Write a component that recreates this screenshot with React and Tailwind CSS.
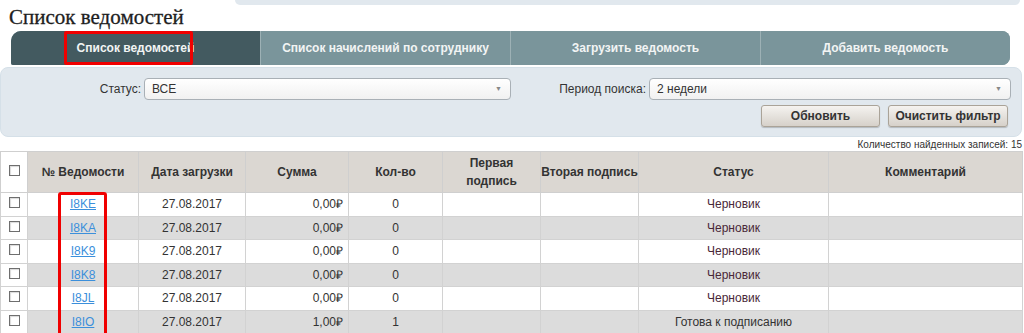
import React from 'react';

const rows = [
  { id: 'I8KE', sum: '0,00', qty: '0', status: 'Черновик' },
  { id: 'I8KA', sum: '0,00', qty: '0', status: 'Черновик' },
  { id: 'I8K9', sum: '0,00', qty: '0', status: 'Черновик' },
  { id: 'I8K8', sum: '0,00', qty: '0', status: 'Черновик' },
  { id: 'I8JL', sum: '0,00', qty: '0', status: 'Черновик' },
  { id: 'I8IO', sum: '1,00', qty: '1', status: 'Готова к подписанию' },
];

const tabs = ['Список ведомостей', 'Список начислений по сотруднику', 'Загрузить ведомость', 'Добавить ведомость'];

const Checkbox = () => (
  <span className="inline-block w-[11px] h-[11px] border border-[#6e6e6e] bg-white shadow-[inset_1px_1px_1px_rgba(0,0,0,0.15)]" />
);

const Select = ({ value }) => (
  <div className="flex-1 h-[22px] flex items-center justify-between pl-[7px] pr-[8px] rounded-[4px] border border-[#a9b0b6] bg-gradient-to-b from-white to-[#f1f1f1] text-[12px] text-[#333]">
    <span>{value}</span>
    <span className="text-[7px] text-[#888]">▼</span>
  </div>
);

const Button = ({ children, className }) => (
  <button className={`h-[22px] rounded-[3px] border border-[#aaa398] bg-gradient-to-b from-[#f5f3f0] to-[#d6d1ca] text-[12px] font-bold text-[#333] shadow-[0_1px_1px_rgba(0,0,0,0.2)] ${className}`}>
    {children}
  </button>
);

export default function App() {
  return (
    <div className="relative w-[1024px] h-[333px] overflow-hidden bg-white font-['Liberation_Sans',Arial,sans-serif] text-[#333]">
      {/* top panel strip */}
      <div className="flex">
        <div className="w-[235px]" />
        <div className="w-[785px] h-[5px] bg-[#e1e8ee] rounded-bl-[8px] rounded-br-[8px]" />
      </div>

      <h1 className="pl-[9px] mt-[-1px] h-[27px] font-['Liberation_Serif',serif] text-[21px] leading-[27px] text-[#1e1e1e] [-webkit-text-stroke:0.3px_#1e1e1e]">Список ведомостей</h1>

      {/* tabs */}
      <div className="ml-[11px] w-[999px] h-[34px] flex rounded-tl-[10px] rounded-bl-[2px] rounded-r-[8px] overflow-hidden bg-[#7a959b]">
        {tabs.map((t, i) => (
          <div
            key={t}
            className={`flex-1 flex items-center justify-center text-[12px] font-bold text-[#f2f4f4] ${i === 0 ? 'bg-[#435a60]' : 'bg-[#7a959b]'} ${i > 0 ? 'border-l border-[#9db1b5]' : ''}`}
          >
            {t}
          </div>
        ))}
      </div>

      {/* filter panel */}
      <div className="mt-[2px] w-[1022px] h-[70px] rounded-[8px] border border-[#d5e0e8] bg-[#e1e8ee] pt-[10px]">
        <div className="flex items-center">
          <div className="flex items-center w-[510px]">
            <span className="w-[143px] text-right pr-[3px] text-[12px]">Статус:</span>
            <Select value="ВСЕ" />
          </div>
          <div className="flex items-center w-[499px] ml-[1px]">
            <span className="w-[137px] text-right pr-[3px] text-[12px]">Период поиска:</span>
            <Select value="2 недели" />
          </div>
        </div>
        <div className="flex justify-end gap-[8px] mt-[5px] pr-[13px]">
          <Button className="w-[119px]">Обновить</Button>
          <Button className="w-[120px]">Очистить фильтр</Button>
        </div>
      </div>

      <div className="h-[14px] flex items-end justify-end pr-[2px] text-[10px] leading-[12px] text-[#333]">
        Количество найденных записей: 15
      </div>

      {/* table */}
      <table className="w-[1022px] border-collapse table-fixed text-[12px]">
        <colgroup>
          <col className="w-[27px]" />
          <col className="w-[111px]" />
          <col className="w-[107px]" />
          <col className="w-[103px]" />
          <col className="w-[94px]" />
          <col className="w-[98px]" />
          <col className="w-[98px]" />
          <col className="w-[190px]" />
          <col className="w-[194px]" />
        </colgroup>
        <thead>
          <tr className="h-[41px] font-bold">
            <th className="border border-[#cfcfcf] bg-white align-middle"><Checkbox /></th>
            <th className="border border-[#cfcfcf] bg-[#dbd7d2]">№ Ведомости</th>
            <th className="border border-[#cfcfcf] bg-[#dbd7d2]">Дата загрузки</th>
            <th className="border border-[#cfcfcf] bg-[#dbd7d2]">Сумма</th>
            <th className="border border-[#cfcfcf] bg-[#dbd7d2]">Кол-во</th>
            <th className="border border-[#cfcfcf] bg-[#dbd7d2] leading-[18px]">Первая<br />подпись</th>
            <th className="border border-[#cfcfcf] bg-[#dbd7d2]">Вторая подпись</th>
            <th className="border border-[#cfcfcf] bg-[#dbd7d2]">Статус</th>
            <th className="border border-[#cfcfcf] bg-[#dbd7d2]">Комментарий</th>
          </tr>
        </thead>
        <tbody>
          {rows.map((r, i) => {
            const bg = i % 2 === 1 ? 'bg-[#dcdcdc]' : 'bg-white';
            const cell = `border border-[#d2d2d2] ${bg}`;
            return (
              <tr key={r.id} className="h-[23.5px]">
                <td className="border border-[#d2d2d2] bg-white text-center align-middle"><Checkbox /></td>
                <td className={`${cell} text-center`}>
                  <a className="text-[#3b8fdb] underline">{r.id}</a>
                </td>
                <td className={`${cell} text-center`}>27.08.2017</td>
                <td className={`${cell} text-right pr-[5px]`}>{r.sum}₽</td>
                <td className={`${cell} text-center`}>{r.qty}</td>
                <td className={cell} />
                <td className={cell} />
                <td className={`${cell} text-center ${r.status === 'Черновик' ? 'text-[#4a2838]' : ''}`}>{r.status}</td>
                <td className={cell} />
              </tr>
            );
          })}
        </tbody>
      </table>

      {/* red highlight annotations */}
      <div className="absolute left-[64px] top-[31px] w-[129px] h-[34px] border-[3px] border-[#f00000] rounded-[2px] pointer-events-none" />
      <div className="absolute left-[58px] top-[192px] w-[49px] h-[150px] border-[3px] border-[#f00000] rounded-[3px] pointer-events-none" />
    </div>
  );
}
